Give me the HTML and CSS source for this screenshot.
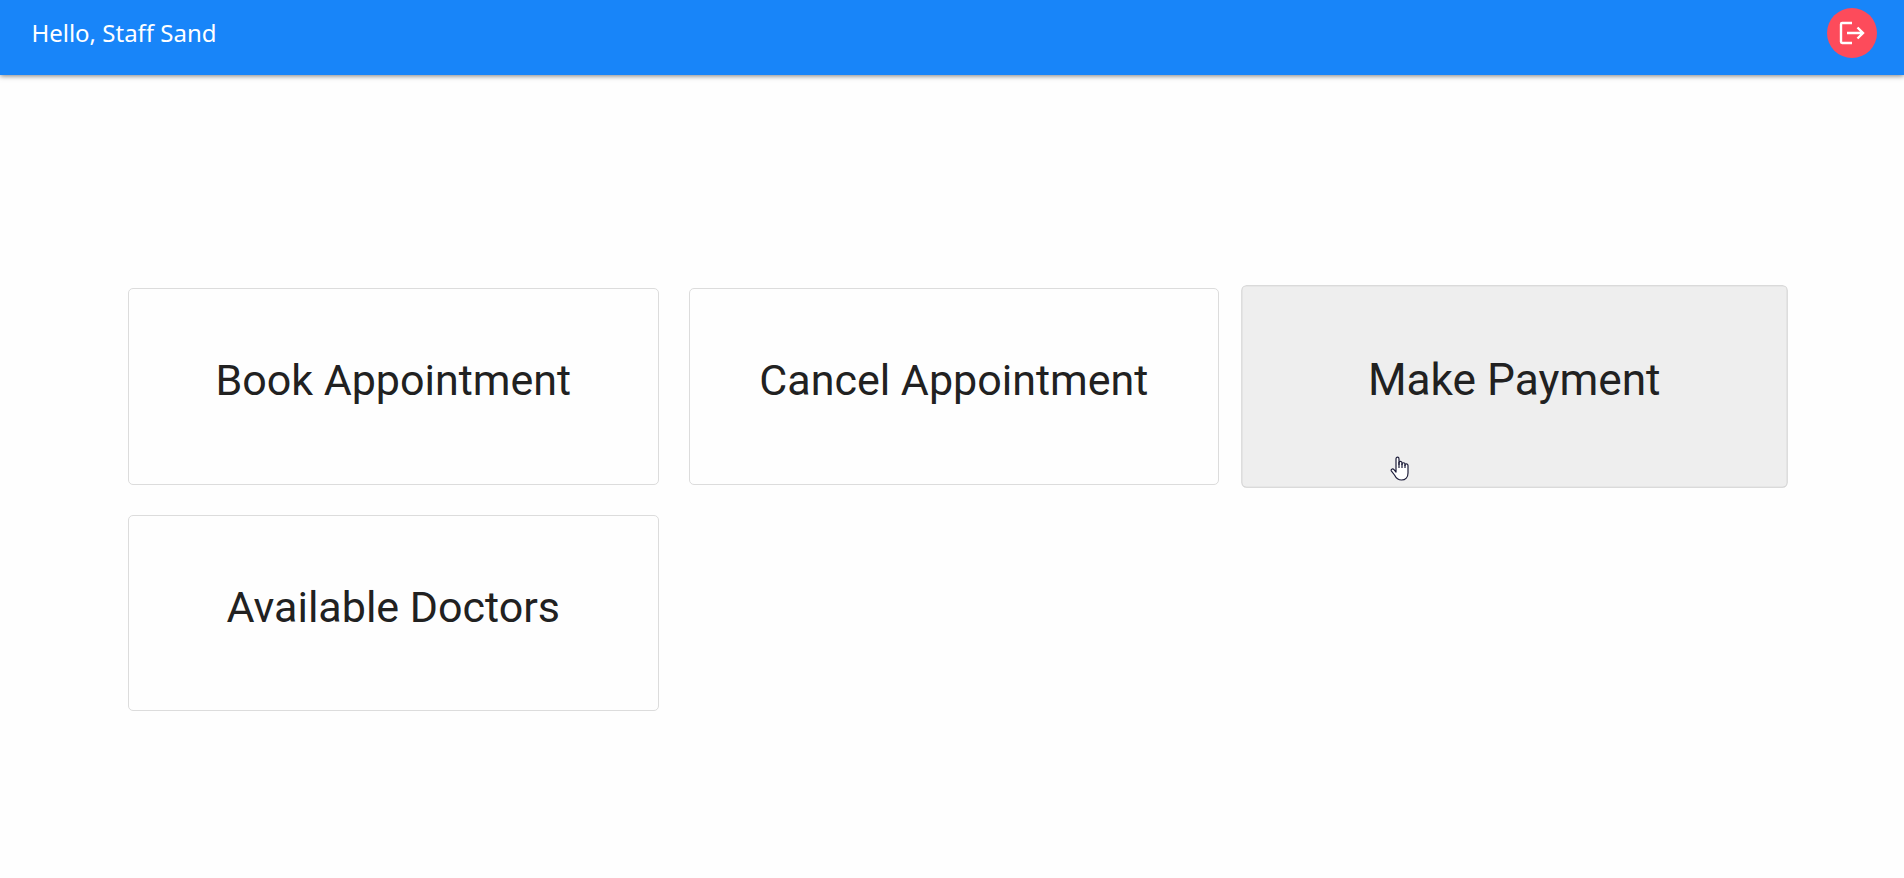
FILE: index.html
```html
<!DOCTYPE html>
<html lang="en">
<head>
<meta charset="utf-8">
<title>Staff Dashboard</title>
<link rel="stylesheet" href="styles.css">
</head>
<body>
<header class="topbar">
  <span class="greeting">Hello, Staff Sand</span>
  <button class="logout" aria-label="Log out">
    <svg width="26" height="24" viewBox="0 0 26 24" fill="none" stroke="#fff" stroke-width="2.4"><path d="M13 2H3.2Q2 2 2 3.2V20.8Q2 22 3.2 22H13M8 12H24M18.5 6.5L24 12L18.5 17.5"/></svg>
  </button>
</header>
<main class="menu">
  <a class="card"><span class="label">Book Appointment</span></a>
  <a class="card"><span class="label">Cancel Appointment</span></a>
  <a class="card active"><span class="label">Make Payment</span></a>
  <a class="card"><span class="label">Available Doctors</span></a>
</main>
<svg class="cursor" width="20" height="26" viewBox="0 0 20 26"><path d="M6 16V3C6 .5 9 .5 9 3V8.5V6.5C9 5 12 5 12 7V8.5C12 6 15 6.5 15 8V9.5C15 7 18 7.5 18 9.5V17C18 21 15.5 24 11.5 24C7.5 24 6 22 4.5 19L1.3 14.8C.5 13.5 2.5 12.2 4 13.6Z" fill="#fff" stroke="#1b1b38" stroke-width="1.2" stroke-linejoin="round"/><path d="M9 6V12M12 7.5V12M15 8.5V12" stroke="#1b1b38" stroke-width="1.2"/></svg>
</body>
</html>
```
FILE: styles.css
```css
* {
  box-sizing: border-box;
}

body {
  margin: 0;
  min-height: 878px;
  background: #fefefe;
  font-family: Roboto, sans-serif;
  color: #212121;
}

.topbar {
  display: flex;
  justify-content: space-between;
  align-items: flex-start;
  height: 75px;
  padding: 8px 27px 0 31.4px;
  background: #1885f9;
  box-shadow: 0 1px 5px rgba(0, 0, 0, 0.5);
}

.greeting {
  font-family: "Noto Sans", sans-serif;
  font-size: 24px;
  line-height: 50px;
  color: #fff;
}

.logout {
  display: flex;
  align-items: center;
  justify-content: center;
  width: 50px;
  height: 50px;
  padding: 0;
  border: 0;
  border-radius: 50%;
  background: #fd4b5b;
}

.menu {
  display: grid;
  grid-template-columns: repeat(3, 1fr);
  grid-auto-rows: 196.5px;
  gap: 30px;
  width: 1651.6px;
  margin: 213px 0 0 128px;
}

.card {
  display: flex;
  justify-content: center;
  padding-top: 61px;
  border: 1px solid #dcdcdc;
  border-radius: 5px;
  background: #fefefe;
}

.active {
  border-color: #d0d0d0;
  background: #eee;
  transform: scale(1.029, 1.027);
}

.label {
  font-size: 43px;
  line-height: 60px;
  white-space: nowrap;
}

.cursor {
  position: absolute;
  left: 1390px;
  top: 456px;
}
```
